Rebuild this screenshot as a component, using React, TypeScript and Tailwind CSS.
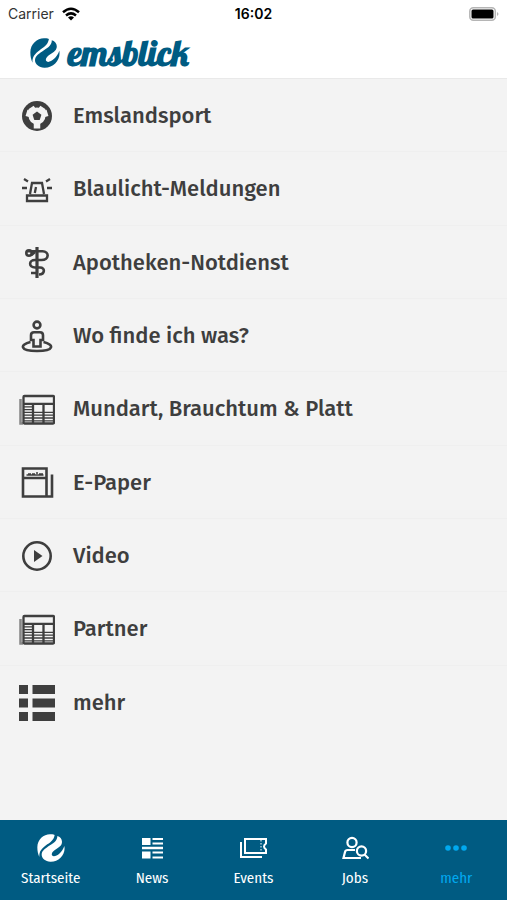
import type { ReactNode } from 'react';

function Swirl({ className }: { className?: string }) {
  return (
    <svg viewBox="0 0 84 84" className={className} fill="currentColor" aria-hidden="true">
      <path d="M39 1C20 1 1 17 1 40 1 52 3 60 7 69 6 52 14 44 27 34 38 26 50 20 53 3 48 1 44 1 39 1Z" />
      <path d="M61 6C69 8 75 15 75 23 75 34 67 39 58 45 49 51 42 57 45 64 51 73 74 60 82 36 87 60 66 84 40 83 25 82 14 73 14 62 14 50 26 43 39 34 53 25 61 19 61 6Z" />
    </svg>
  );
}

function Icon({ children, fill = false }: { children: ReactNode; fill?: boolean }) {
  return (
    <svg
      viewBox="0 0 36 36"
      className="size-9 shrink-0"
      fill={fill ? 'currentColor' : 'none'}
      stroke={fill ? 'none' : 'currentColor'}
      strokeWidth="2.6"
      aria-hidden="true"
    >
      {children}
    </svg>
  );
}

const soccer = (
  <Icon fill>
    <circle cx="18" cy="18" r="15" />
    <circle cx="18" cy="18" r="8.500" fill="#f3f3f3" />
    <path
      d="M18 18v12.500M18 18l10.500-3.200M18 18 7.500 14.800M18 18l6-8.500M18 18l-6-8.500"
      stroke="#f3f3f3"
      strokeWidth="6.500"
    />
    <path d="m18 13.500 4.400 3.200-1.700 5.200h-5.400l-1.700-5.200Z" />
  </Icon>
);

const siren = (
  <Icon>
    <path d="M8 24.500h20v5.500H8ZM11 23l2-11h10L25 23M15.800 22l1.200-6" strokeWidth="2.300" />
    <path d="m5 8 4 2.500M3 17h5M31 8l-4 2.500M33 17h-5" strokeWidth="2.300" />
  </Icon>
);

const pharmacy = (
  <Icon>
    <path d="M18 3v31" strokeWidth="3.200" />
    <path d="M8 7.200h15.500c7 0 7 8.800-1 8.800H16c-6.500 0-6.500 7.500 0 7.500h5c5.500 0 5 7-1 7M12 29h5" />
    <circle cx="10" cy="9" r="2.700" />
    <path d="m12.500 11 3.500-3" />
  </Icon>
);

const person = (
  <Icon>
    <circle cx="18" cy="7" r="3.400" />
    <path d="M15 14.200h6c2 0 3 1 3 3v4.800h-2.500v6.500h-7V22H12v-4.800c0-2 1-3 3-3Z" />
    <path d="M11.500 24c-11 2.500-11 9 6.500 9s17.500-6.500 6.500-9" />
  </Icon>
);

const newspaper = (
  <Icon>
    <path d="M1.500 8v24.500H4" strokeWidth="2.500" opacity=".6" />
    <rect x="4.500" y="5" width="30.500" height="27.500" rx="1" strokeWidth="2.300" />
    <path d="M4 12.800h31M14 13v19M24.500 13v19" strokeWidth="2.300" />
    <path
      d="M5 15.800h9M5 18.600h9M5 21.400h9M5 24.200h9M5 27h9M5 29.800h9M14 21.400h21M14 24.200h21M14 27h21M14 29.800h21"
      strokeWidth="1.300"
    />
  </Icon>
);

const epaper = (
  <Icon>
    <path d="M4 4.500h23.500v28H4ZM4 14h23.500M27.500 32.500h5.500v-22" />
    <path d="M7.500 11h17M9 9.800h3m1 0h3m1-.800h2m1 .800h4" strokeWidth="1.300" />
  </Icon>
);

const play = (
  <Icon>
    <circle cx="18" cy="18" r="13.700" />
    <path d="m15 12 8.500 6-8.500 6Z" fill="currentColor" stroke="none" />
  </Icon>
);

const list = (
  <Icon fill>
    <path d="M0 0h9v9H0zM13.500 0H36v9H13.500zM0 13.500h9v9H0zM13.500 13.500H36v9H13.500zM0 27h9v9H0zM13.500 27H36v9H13.500z" />
  </Icon>
);

const entries = [
  { label: 'Emslandsport', icon: soccer },
  { label: 'Blaulicht-Meldungen', icon: siren },
  { label: 'Apotheken-Notdienst', icon: pharmacy },
  { label: 'Wo finde ich was?', icon: person },
  { label: 'Mundart, Brauchtum & Platt', icon: newspaper },
  { label: 'E-Paper', icon: epaper },
  { label: 'Video', icon: play },
  { label: 'Partner', icon: newspaper },
  { label: 'mehr', icon: list },
];

const tabs = [
  { label: 'Startseite', icon: <Swirl className="size-7" /> },
  {
    label: 'News',
    icon: (
      <svg viewBox="0 0 28 28" className="size-7" fill="currentColor" aria-hidden="true">
        <path d="M4 4h8.500v7H4zM14.500 4H25v2H14.500zM14.500 8.500H25v2H14.500zM4 12.800h21v2.400H4zM4 17.500h8.500v7H4zM14.500 17.500H25v2H14.500zM14.500 22.500H25v2H14.500z" />
      </svg>
    ),
  },
  {
    label: 'Events',
    icon: (
      <svg viewBox="0 0 28 28" className="size-7" fill="none" stroke="currentColor" strokeWidth="2" aria-hidden="true">
        <path d="M6 5h21v4.500q-4 3 0 6V19H6ZM2 8v15h21" />
        <path d="M22 6v12" strokeWidth="1" strokeDasharray="1.500 1.500" />
      </svg>
    ),
  },
  {
    label: 'Jobs',
    icon: (
      <svg viewBox="0 0 28 28" className="size-7" fill="none" stroke="currentColor" strokeWidth="2.200" aria-hidden="true">
        <circle cx="11" cy="8.500" r="4.600" />
        <path d="M14 16H6.500q-2 0-2.500 2l-1.500 6H20" />
        <circle cx="20.500" cy="17" r="4.600" />
        <path d="m23.500 20.500 4 4" />
      </svg>
    ),
  },
  {
    label: 'mehr',
    active: true,
    icon: (
      <svg viewBox="0 0 28 28" className="size-7" fill="currentColor" aria-hidden="true">
        <circle cx="6" cy="14" r="2.800" />
        <circle cx="14" cy="14" r="2.800" />
        <circle cx="22" cy="14" r="2.800" />
      </svg>
    ),
  },
];

function StatusBar() {
  return (
    <div className="grid h-7 grid-cols-3 items-center px-2 font-['Inter',sans-serif] text-sm text-black">
      <div className="flex items-center gap-2">
        <span className="text-[#333]">Carrier</span>
        <svg viewBox="0 0 18 14" className="h-3.5 w-[18px]" fill="none" stroke="currentColor" strokeWidth="2.500" aria-hidden="true">
          <path d="M1 5.200q8-7 16 0M4 8.500q5-4.200 10 0" />
          <path d="m6 10.500q3-2.500 6 0L9 13.500Z" fill="currentColor" stroke="none" />
        </svg>
      </div>
      <span className="text-center font-semibold">16:02</span>
      <svg viewBox="0 0 30 14" className="h-3.5 w-[30px] justify-self-end" aria-hidden="true">
        <rect x=".8" y=".8" width="25.500" height="12.400" rx="3.500" fill="#fff" stroke="#b5b5b5" strokeWidth="1.500" />
        <rect x="2.500" y="2.500" width="22" height="9" rx="1.500" />
        <path d="M28 5q3 2 0 4Z" fill="#b5b5b5" />
      </svg>
    </div>
  );
}

export default function App() {
  return (
    <div className="flex min-h-screen flex-col bg-[#f3f3f3] font-['Fira_Sans','Noto_Sans',sans-serif]">
      <header className="border-b border-[#e9e9e9] bg-white">
        <StatusBar />
        <a href="#start" className="flex h-[50px] items-center gap-2 px-[30px] text-[#005b82]">
          <Swirl className="size-[30px]" />
          <span className="font-['Lobster','Oleo_Script','Lato',sans-serif] text-[36px] leading-10 font-bold">emsblick</span>
        </a>
      </header>

      <main className="flex-1">
        <ul className="grid min-h-[660px] auto-rows-fr">
          {entries.map((entry) => (
            <li key={entry.label} className="border-b border-[#efefef] last:border-b-0">
              <a href="#menu" className="flex h-full items-center gap-[18px] px-[19px] pt-px text-[22px] font-medium text-[#3e3e3e]">
                {entry.icon}
                {entry.label}
              </a>
            </li>
          ))}
        </ul>
      </main>

      <nav className="grid h-20 grid-cols-5 bg-[#005b82] font-['Fira_Sans_Condensed','Fira_Sans','Noto_Sans',sans-serif] text-white">
        {tabs.map((tab) => (
          <a
            key={tab.label}
            href="#tab"
            className={`flex flex-col items-center gap-1.5 pt-3.5 text-[15px] leading-5 ${tab.active ? 'text-[#00a9f0]' : ''}`}
          >
            {tab.icon}
            {tab.label}
          </a>
        ))}
      </nav>
    </div>
  );
}
